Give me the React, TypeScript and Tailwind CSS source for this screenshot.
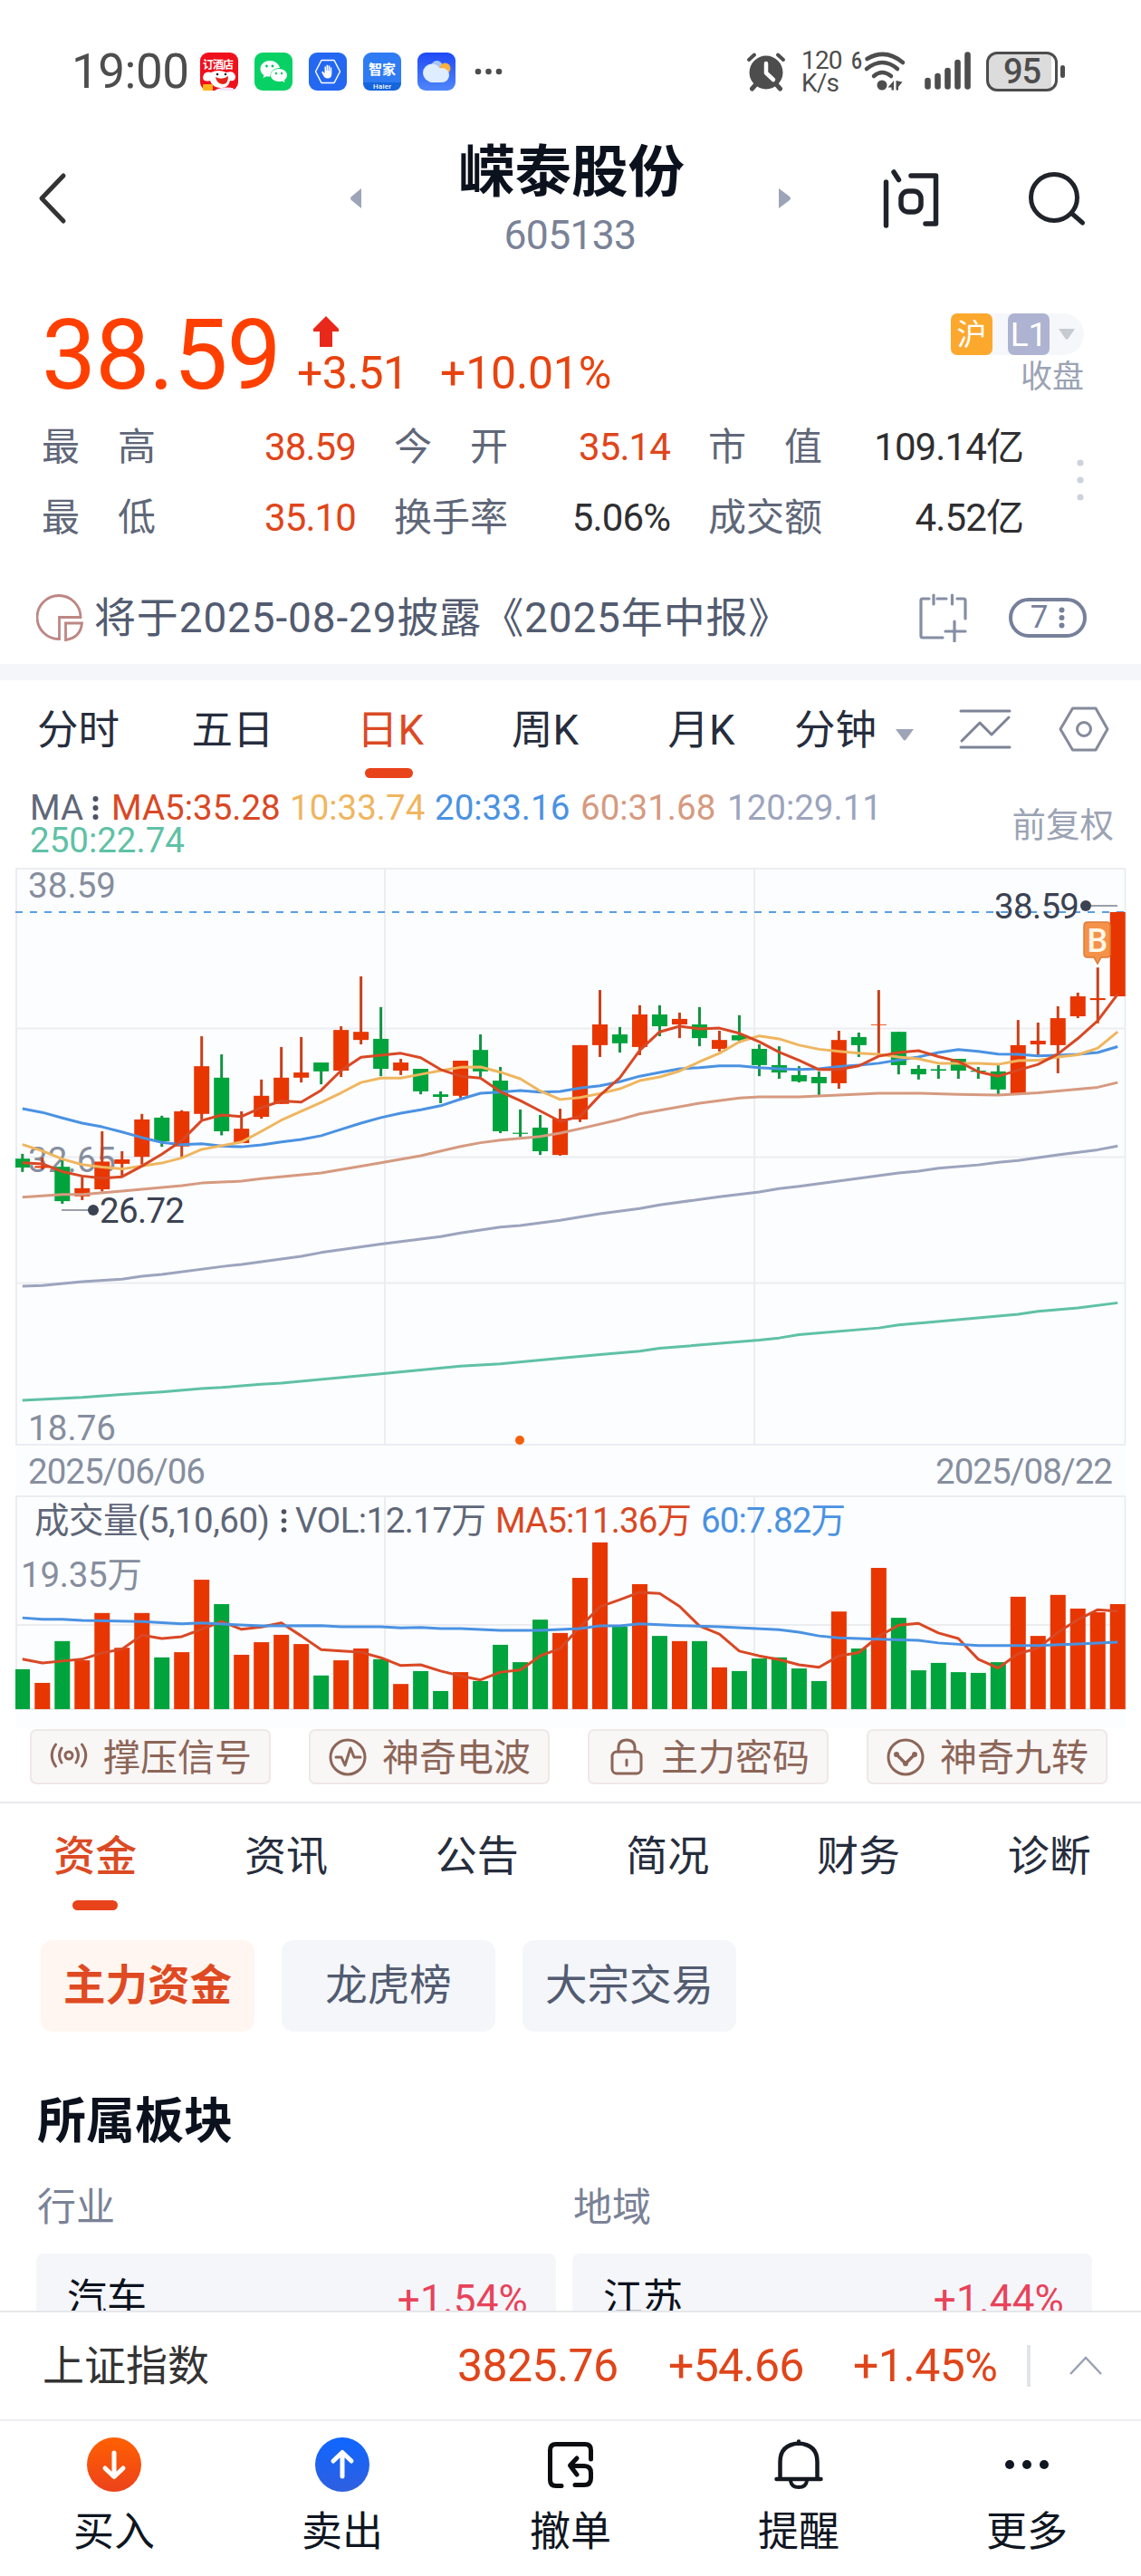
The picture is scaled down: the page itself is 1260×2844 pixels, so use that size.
import type { ReactNode } from 'react'

const UP = '#e83600'
const DOWN = '#00a33c'

// top, bottom, high, low, 1 = rising day
const candles = [
  [1321, 1345, 1308, 1357, 0], [1341, 1346, 1318, 1350, 1], [1343, 1436, 1325, 1443, 0], [1401, 1423, 1370, 1433, 1],
  [1329, 1404, 1247, 1410, 1], [1323, 1335, 1301, 1370, 1], [1215, 1316, 1200, 1337, 1], [1210, 1274, 1205, 1289, 0],
  [1193, 1288, 1190, 1318, 1], [1071, 1200, 990, 1215, 1], [1102, 1247, 1039, 1258, 0], [1240, 1279, 1193, 1279, 1],
  [1151, 1208, 1107, 1213, 1], [1102, 1173, 1019, 1173, 1], [1088, 1102, 992, 1115, 1], [1061, 1085, 1061, 1120, 0],
  [973, 1083, 963, 1100, 1], [978, 1000, 828, 1012, 1], [997, 1078, 911, 1098, 0], [1061, 1083, 1051, 1095, 1],
  [1078, 1139, 1078, 1147, 0], [1147, 1154, 1139, 1171, 0], [1056, 1151, 1056, 1159, 1], [1027, 1085, 985, 1100, 0],
  [1110, 1247, 1073, 1252, 0], [1251, 1254, 1188, 1262, 0], [1237, 1301, 1203, 1311, 0], [1213, 1311, 1186, 1313, 1],
  [1014, 1215, 1014, 1222, 1], [958, 1014, 865, 1046, 1], [985, 1009, 965, 1034, 0], [931, 1019, 906, 1041, 1],
  [931, 963, 906, 990, 0], [943, 958, 926, 995, 1], [958, 995, 911, 1017, 0], [1000, 1024, 975, 1031, 1],
  [987, 1001, 933, 1008, 0], [1024, 1068, 1012, 1098, 0], [1068, 1088, 1017, 1105, 0], [1095, 1112, 1071, 1115, 0],
  [1100, 1117, 1085, 1149, 0], [1000, 1117, 975, 1132, 1], [992, 1014, 980, 1046, 0], [958, 960, 865, 1041, 1],
  [978, 1068, 978, 1093, 0], [1078, 1093, 1068, 1107, 0], [1079, 1083, 1068, 1105, 0], [1051, 1083, 1051, 1105, 0],
  [1083, 1086, 1073, 1105, 0], [1085, 1134, 1068, 1147, 0], [1014, 1145, 946, 1145, 1], [1002, 1012, 953, 1041, 1],
  [941, 1014, 909, 1090, 1], [882, 936, 872, 941, 1], [887, 892, 804, 955, 1], [654, 882, 654, 882, 1],
]

const ma5 = [1332, 1335, 1356, 1368, 1374, 1370, 1341, 1309, 1272, 1218, 1203, 1207, 1183, 1165, 1168, 1136, 1083, 1047, 1041, 1036, 1048, 1080, 1098, 1103, 1140, 1164, 1192, 1220, 1207, 1150, 1102, 1028, 978, 963, 970, 968, 982, 1005, 1033, 1055, 1080, 1080, 1070, 1044, 1034, 1029, 1045, 1058, 1086, 1098, 1082, 1066, 1038, 996, 948, 876]
const ma10 = [1283, 1300, 1322, 1337, 1344, 1349, 1341, 1333, 1319, 1296, 1286, 1276, 1247, 1217, 1193, 1169, 1143, 1115, 1103, 1103, 1093, 1083, 1074, 1073, 1087, 1105, 1138, 1161, 1156, 1145, 1132, 1110, 1100, 1084, 1059, 1036, 1005, 989, 997, 1014, 1025, 1031, 1036, 1039, 1046, 1051, 1063, 1063, 1063, 1066, 1056, 1055, 1046, 1040, 1022, 978]
const ma20 = [1186, 1196, 1211, 1225, 1235, 1249, 1264, 1277, 1283, 1281, 1287, 1289, 1284, 1276, 1269, 1259, 1242, 1225, 1210, 1198, 1189, 1178, 1160, 1144, 1141, 1137, 1141, 1139, 1130, 1124, 1113, 1098, 1088, 1078, 1075, 1070, 1070, 1075, 1078, 1080, 1078, 1072, 1068, 1063, 1054, 1046, 1034, 1026, 1031, 1038, 1039, 1043, 1041, 1039, 1034, 1018]
const ma60 = [[0, 1425], [2, 1418], [3, 1418], [5, 1409], [8, 1394], [9, 1387], [11, 1382], [12, 1375], [15, 1360], [18, 1332], [20, 1313], [22, 1288], [23, 1278], [24, 1271], [26, 1261], [27, 1252], [28, 1240], [30, 1215], [31, 1200], [34, 1171], [36, 1157], [37, 1154], [39, 1154], [43, 1144], [45, 1144], [47, 1147], [49, 1149], [51, 1143], [54, 1128], [55, 1115]]
const ma120 = [[0, 1666], [1, 1664], [3, 1654], [5, 1647], [6, 1639], [7, 1634], [10, 1613], [11, 1607], [14, 1585], [15, 1575], [18, 1552], [21, 1532], [22, 1522], [24, 1506], [25, 1502], [27, 1488], [29, 1470], [31, 1456], [32, 1446], [35, 1424], [37, 1411], [38, 1402], [39, 1396], [44, 1360], [45, 1355], [46, 1347], [48, 1338], [49, 1331], [50, 1326], [52, 1311], [54, 1297], [55, 1287]]
const ma250 = [[0, 1975], [3, 1967], [5, 1959], [7, 1952], [9, 1943], [10, 1940], [12, 1931], [13, 1928], [18, 1903], [22, 1882], [24, 1876], [27, 1861], [29, 1851], [31, 1842], [32, 1834], [37, 1812], [38, 1806], [39, 1797], [43, 1779], [44, 1771], [50, 1742], [51, 1734], [53, 1725], [55, 1711]]

const volumes = [1232, 1269, 1156, 1208, 1080, 1174, 1080, 1200, 1186, 990, 1056, 1193, 1159, 1139, 1164, 1249, 1208, 1176, 1205, 1272, 1237, 1291, 1240, 1264, 1166, 1213, 1098, 1134, 985, 889, 1117, 1002, 1142, 1156, 1156, 1227, 1237, 1203, 1200, 1230, 1264, 1076, 1176, 958, 1093, 1235, 1215, 1240, 1242, 1213, 1036, 1142, 1031, 1068, 1078, 1056]
const vol5 = [1205, 1215, 1210, 1205, 1188, 1178, 1140, 1149, 1144, 1124, 1103, 1124, 1118, 1107, 1142, 1179, 1183, 1186, 1201, 1222, 1220, 1237, 1250, 1261, 1240, 1234, 1196, 1176, 1118, 1063, 1044, 1024, 1027, 1062, 1115, 1137, 1183, 1196, 1206, 1220, 1227, 1196, 1187, 1143, 1113, 1108, 1134, 1149, 1205, 1229, 1190, 1175, 1132, 1098, 1071, 1075]
const vol60 = [[0, 1093], [1, 1097], [2, 1097], [3, 1100], [6, 1103], [8, 1109], [9, 1107], [12, 1115], [15, 1114], [16, 1117], [18, 1117], [19, 1120], [20, 1119], [21, 1122], [22, 1122], [24, 1127], [26, 1127], [28, 1122], [29, 1115], [30, 1115], [31, 1109], [33, 1114], [35, 1117], [38, 1125], [39, 1132], [40, 1142], [41, 1147], [43, 1151], [45, 1154], [46, 1161], [48, 1168], [51, 1168], [53, 1164], [55, 1159]]

const px = (i: number) => 24.8 + i * 21.99
const py = (v: number) => 740 + v / 2.45
const vy = (v: number) => 1340 + v / 2.45

function points(series: number[] | number[][], y: (v: number) => number) {
  return series
    .map((p, i) => (Array.isArray(p) ? `${px(p[0])},${y(p[1])}` : `${px(i)},${y(p)}`))
    .join(' ')
}

function Label({ x, y, w, fill = '#868e9e', children }: { x: number; y: number; w: number; fill?: string; children: string }) {
  return (
    <text x={x} y={y} textLength={w} fontSize="38.500" fill={fill}>
      {children}
    </text>
  )
}

function StockChart() {
  return (
    <svg className="block shrink-0" width="1260" height="950" viewBox="0 958 1260 950">
      <rect x="17" y="958" width="1226" height="950" fill="#fcfdff" />
      <g stroke="#ebedf1" strokeWidth="2" fill="none">
        <path d="M17 959H1243M17 1135.5H1243M17 1277.5H1243M17 1416.5H1243M17 1595H1243M17 1652H1243M17 1794H1243M17 1887H1243" />
        <path d="M18 958V1595M425 958V1595M833 958V1595M1242.500 958V1595M18 1652V1887M425 1652V1887M833 1652V1887M1242.500 1652V1887" />
      </g>

      <Label x={31} y={991} w={97}>38.59</Label>
      <Label x={31} y={1294} w={97}>32.65</Label>
      <Label x={31} y={1590} w={97}>18.76</Label>
      <Label x={31} y={1638} w={196}>2025/06/06</Label>
      <Label x={1033} y={1638} w={196}>2025/08/22</Label>

      <path d="M17 1007H1243" stroke="#5a9fe2" strokeWidth="2.200" strokeDasharray="8 8" />

      {candles.map(([top, bottom, high, low, up], i) => (
        <g key={i} fill={up ? UP : DOWN}>
          <rect x={px(i) - 1.5} y={py(high)} width="3" height={(low - high) / 2.45} fill={up ? '#c8401a' : '#149243'} />
          <rect x={i === 0 ? 17 : px(i) - 8.5} y={py(top)} width={i === 0 ? 16 : 17} height={(bottom - top) / 2.45} />
        </g>
      ))}

      <g fill="none" strokeWidth="3" strokeLinejoin="round">
        <polyline points={points(ma250, py)} stroke="#5fc1a6" />
        <polyline points={points(ma120, py)} stroke="#9ca4bd" />
        <polyline points={points(ma60, py)} stroke="#d69a80" />
        <polyline points={points(ma20, py)} stroke="#4a92e2" />
        <polyline points={points(ma10, py)} stroke="#efb65f" />
        <polyline points={points(ma5, py)} stroke="#d94824" />
      </g>

      <path d="M68 1336H98M1205 1000H1234" stroke="#9a9fa8" strokeWidth="2" />
      <circle cx="103" cy="1336" r="6" fill="#3b4252" />
      <Label x={110} y={1350} w={94} fill="#3b4252">26.72</Label>
      <circle cx="1199" cy="1000" r="6" fill="#3b4252" />
      <Label x={1098} y={1014} w={94} fill="#3b4252">38.59</Label>

      <path d="M1201 1018H1222Q1226 1018 1226 1022V1053Q1226 1057 1222 1057H1216L1212 1064L1208 1057H1201Q1197 1057 1197 1053V1022Q1197 1018 1201 1018Z" fill="#f4924a" stroke="#de7a35" strokeWidth="1.500" />
      <text x="1200.500" y="1051" fontSize="36" fontWeight="500" fill="#fff7e6">B</text>
      <circle cx="574" cy="1590" r="5" fill="#f2600c" />

      <Label x={38} y={1692} w={260} fill="#5f6778">成交量(5,10,60)</Label>
      <g fill="#4b5263">
        <circle cx="313.500" cy="1669" r="2.800" />
        <circle cx="313.500" cy="1679" r="2.800" />
        <circle cx="313.500" cy="1689" r="2.800" />
      </g>
      <Label x={326} y={1692} w={211} fill="#5f6778">VOL:12.17万</Label>
      <Label x={547} y={1692} w={217} fill="#d94824">MA5:11.36万</Label>
      <Label x={774} y={1692} w={160} fill="#4a92e2">60:7.82万</Label>
      <Label x={23} y={1752} w={134}>19.35万</Label>

      {volumes.map((v, i) => (
        <rect key={i} x={i === 0 ? 17 : px(i) - 8.5} y={vy(v)} width={i === 0 ? 16 : 17} height={(1340 - v) / 2.45} fill={candles[i][4] ? UP : DOWN} />
      ))}
      <g fill="none" strokeWidth="3" strokeLinejoin="round">
        <polyline points={points(vol5, vy)} stroke="#d94824" />
        <polyline points={points(vol60, vy)} stroke="#4a92e2" />
      </g>
    </svg>
  )
}

function StatusBar() {
  return (
    <div className="flex h-[158px] shrink-0 items-center pl-[79px] text-[#4d4d4d]">
      <div className="w-[142px] text-[53px] leading-none tracking-[-0.5px]">19:00</div>
      <div className="flex gap-[18px]">
        <svg width="42" height="42" viewBox="0 0 42 42">
          <rect width="42" height="42" rx="9" fill="#f0101c" />
          <text x="3" y="18" fontSize="12" fontWeight="700" fill="#fff" textLength="34">订酒店</text>
          <path d="M3 28Q4 20 12 22Q20 18 29 22Q38 19 39 27Q39 32 33 31Q31 40 22 39Q13 38 11 31Q4 33 3 28Z" fill="#fff" />
          <path d="M17 27Q24 31 31 26Q31 35 25 35Q18 34 17 27Z" fill="#e2231a" />
          <circle cx="19" cy="24" r="1.300" fill="#222" />
          <circle cx="28" cy="24" r="1.300" fill="#222" />
          <rect x="3" y="35" width="11" height="7" rx="1" fill="#ffb31a" />
          <path d="M16 42Q22 37 36 39L38 42Z" fill="#f3e6fa" />
        </svg>
        <svg width="42" height="42" viewBox="0 0 42 42">
          <rect width="42" height="42" rx="9" fill="#07d165" />
          <path d="M17 9C11 9 6.500 13 6.500 18C6.500 21 8 23.500 10.500 25L9.500 28L13.500 26.200Q15 26.600 17.500 26.600C17 21 21.500 17 28 17C27 12.500 22.500 9 17 9Z" fill="#fff" />
          <path d="M27 18C21.800 18 18 21.200 18 25C18 29 22 32 27 32Q29 32 30.500 31.400L33.500 33L33 30.200C34.800 29 36 27.200 36 25C36 21.200 32 18 27 18Z" fill="#fff" />
          <g fill="#07c160">
            <circle cx="13.500" cy="15" r="1.400" />
            <circle cx="20" cy="15" r="1.400" />
            <circle cx="24" cy="23" r="1.200" />
            <circle cx="30" cy="23" r="1.200" />
          </g>
        </svg>
        <svg width="42" height="42" viewBox="0 0 42 42">
          <rect width="42" height="42" rx="9" fill="#2468f2" />
          <path d="M14 8.500H28L34.500 21L28 33.500H14L7.500 21Z" fill="none" stroke="#fff" strokeWidth="1.500" strokeLinejoin="round" />
          <path d="M17 27L14 21.500L15.500 20.800L17.500 23V15.500H19V20H19.500V13.800H21.200V20H21.700V14.500H23.300V20.500H23.800V16.500H25.300V24Q25 28 21.500 28.500Q18.500 28.500 17 27Z" fill="#fff" />
        </svg>
        <svg width="42" height="42" viewBox="0 0 42 42">
          <rect width="42" height="42" rx="9" fill="#2f7bf3" />
          <path d="M0 33H42Q42 42 33 42H9Q0 42 0 33Z" fill="#1565dc" />
          <text x="6" y="24" fontSize="15" fontWeight="700" fill="#fff" textLength="30">智家</text>
          <text x="11" y="40" fontSize="8" fontWeight="500" fill="#fff" textLength="20">Haier</text>
        </svg>
        <svg width="42" height="42" viewBox="0 0 42 42">
          <defs>
            <linearGradient id="sky" x2="0" y2="1">
              <stop stopColor="#1f49f5" />
              <stop offset="1" stopColor="#4f86fa" />
            </linearGradient>
          </defs>
          <rect width="42" height="42" rx="9" fill="url(#sky)" />
          <circle cx="21.500" cy="15.500" r="6.500" fill="#a9c4f8" />
          <circle cx="30.500" cy="17.500" r="6" fill="#fcb13c" />
          <circle cx="16" cy="22.500" r="10" fill="#deedff" />
          <circle cx="27" cy="25" r="8" fill="#deedff" />
          <rect x="12" y="24" width="16" height="9" rx="4" fill="#deedff" />
        </svg>
      </div>
      <svg className="ml-[21px]" width="32" height="10" viewBox="0 0 32 10" fill="currentColor">
        <circle cx="4" cy="5" r="3.300" />
        <circle cx="15.500" cy="5" r="3.300" />
        <circle cx="27" cy="5" r="3.300" />
      </svg>

      <svg className="ml-[268px]" width="44" height="44" viewBox="0 0 44 44" fill="none" stroke="currentColor" strokeLinecap="round">
        <circle cx="22" cy="23" r="18.500" fill="currentColor" stroke="none" />
        <path d="M3 9L9 3.500M41 9L35 3.500" strokeWidth="4" />
        <path d="M10 37L6.500 41M34 37L37.500 41" strokeWidth="5" />
        <path d="M22 13V23.500L30 31" stroke="#fff" strokeWidth="4.500" strokeLinejoin="round" />
      </svg>
      <div className="ml-[17px] w-[57px] text-[28px] leading-[25px] tracking-[-0.800px]">
        <div>120</div>
        <div>K/s</div>
      </div>
      <svg className="overflow-visible" width="60" height="46" viewBox="0 0 60 46" fill="none" stroke="currentColor" strokeLinecap="round">
        <text x="-2" y="20" fontSize="26" fontWeight="500" fill="currentColor" stroke="none" textLength="12" lengthAdjust="spacingAndGlyphs">6</text>
        <path d="M15.500 9Q36 -3 55 13" strokeWidth="4.500" />
        <path d="M15 20Q32.500 6 49 20" strokeWidth="4.500" />
        <path d="M23 28Q32 20 42 28" strokeWidth="4.500" />
        <circle cx="32" cy="38" r="5.500" fill="currentColor" stroke="none" />
        <path d="M45 33V43.500H42.500V40.500H38.500ZM47.500 33V43.500H50V40L54.500 34.500Z" fill="currentColor" stroke="none" />
      </svg>
      <svg className="ml-[19px]" width="52" height="44" viewBox="0 0 52 44" stroke="currentColor" strokeWidth="6.600" strokeLinecap="round">
        <path d="M3.500 32V38.500M14.500 27V38.500M25.500 21V38.500M36.500 12V38.500M47.500 3.500V38.500" />
      </svg>
      <div className="ml-[16px] flex h-[44px] w-[79px] items-center justify-center rounded-[12px] border-[3.5px] border-[#4d4d4d] bg-[linear-gradient(90deg,#dcdcdc_94%,#fff_94%)] text-[38px] leading-none font-medium tracking-[-1px]">
        95
      </div>
      <div className="ml-[3px] h-[14px] w-[5px] rounded-full bg-[#4d4d4d]" />
    </div>
  )
}

function Header() {
  return (
    <div className="flex h-[122px] shrink-0 items-center pl-[42px]">
      <svg width="32" height="60" viewBox="0 0 32 60" fill="none" stroke="#333" strokeWidth="5" strokeLinecap="round" strokeLinejoin="round">
        <path d="M28 5L4 30L28 55" />
      </svg>
      <svg className="ml-[312px]" width="14" height="22" viewBox="0 0 14 22" fill="#9ea4b8">
        <path d="M13 0V22L2 13Q0 11 2 9Z" />
      </svg>
      <div className="ml-[60px] flex w-[342px] flex-col items-center gap-[16px] pt-[3px]">
        <div className="text-[62.500px] leading-[62px] font-bold whitespace-nowrap text-[#0c121d]">嵘泰股份</div>
        <div className="pr-[3px] text-[44.500px] leading-[44px] tracking-[-0.700px] text-[#7a8297]">605133</div>
      </div>
      <svg className="ml-[58px]" width="14" height="22" viewBox="0 0 14 22" fill="#9ea4b8">
        <path d="M0 0V22L12 13Q14 11 12 9Z" />
      </svg>
      <svg className="ml-[101px]" width="62" height="68" viewBox="0 0 62 68" fill="none" stroke="#20242a" strokeWidth="5.500" strokeLinecap="round" strokeLinejoin="round">
        <path d="M3.500 16V64M12 5L17.500 13.500M31 9H58.500V62H47" />
        <rect x="20" y="26" width="22" height="23" rx="8" />
      </svg>
      <svg className="ml-[99px]" width="66" height="62" viewBox="0 0 66 62" fill="none" stroke="#20242a" strokeWidth="5" strokeLinecap="round">
        <circle cx="28" cy="30" r="25.500" />
        <path d="M48 48L59.500 58" />
      </svg>
    </div>
  )
}

function Quote() {
  return (
    <div className="flex h-[173px] shrink-0 items-start pr-[63px] pl-[46px] text-[#e8430f]">
      <div className="mt-[59px] w-[282px] text-[107px] leading-none tracking-[-1px] text-[#ff3f00]">38.59</div>
      <div className="mt-[69px]">
        <svg className="ml-[17px] block" width="30" height="34" viewBox="0 0 30 34">
          <path d="M15 0L29 14V17H22V34H8V17H1V14Z" fill="#e9281c" />
        </svg>
        <div className="mt-[4px] flex text-[50px] leading-none">
          <div className="w-[158px] tracking-[-0.700px]">+3.51</div>
          <div className="tracking-[-0.200px]">+10.01%</div>
        </div>
      </div>
      <div className="mt-[66px] ml-auto flex flex-col items-end">
        <div className="flex h-[46px] items-center rounded-r-full bg-[#f6f7fa] text-[34px] leading-none text-white">
          <div className="flex h-[46px] w-[46px] items-center justify-center rounded-[7px] bg-[#fca82d] text-[33px]">沪</div>
          <div className="ml-[17px] flex h-[46px] w-[46px] items-center justify-center rounded-[7px] bg-[#adb3d0] text-[37px]">L1</div>
          <svg className="mr-[10px] ml-[10px]" width="18" height="12" viewBox="0 0 18 12" fill="#c6cad1">
            <path d="M0 0H18L10.500 11Q9 12.500 7.500 11Z" />
          </svg>
        </div>
        <div className="mt-[7px] text-[35px] leading-none text-[#9ba3b4]">收盘</div>
      </div>
    </div>
  )
}

const stats = [
  [['最', '高'], '38.59', ['今', '开'], '35.14', ['市', '值'], '109.14亿'],
  [['最', '低'], '35.10', ['换', '手', '率'], '5.06%', ['成', '交', '额'], '4.52亿'],
]

function StatLabel({ chars }: { chars: string[] }) {
  return (
    <div className="flex w-[126px] justify-between tracking-normal text-[#5f6778]">
      {chars.map((c) => (
        <span key={c}>{c}</span>
      ))}
    </div>
  )
}

function Stats() {
  return (
    <div className="flex h-[156px] shrink-0 pl-[46px]">
      <div className="w-[1084px] pt-[2px] text-[42px] leading-none">
        {stats.map((row, i) => (
          <div key={i} className="flex h-[78px] items-center tracking-[-0.900px]">
            <StatLabel chars={row[0] as string[]} />
            <div className="w-[221px] text-right text-[#e0451a]">{row[1]}</div>
            <div className="ml-[42px]">
              <StatLabel chars={row[2] as string[]} />
            </div>
            <div className={`w-[179px] text-right ${i === 0 ? 'text-[#e0451a]' : 'text-[#2f2f31]'}`}>{row[3]}</div>
            <div className="ml-[42px]">
              <StatLabel chars={row[4] as string[]} />
            </div>
            <div className="flex-1 text-right text-[#2f2f31]">{row[5]}</div>
          </div>
        ))}
      </div>
      <svg className="mt-[53px] ml-[59px]" width="8" height="48" viewBox="0 0 8 48" fill="#cdd3dc">
        <circle cx="4" cy="5" r="3.600" />
        <circle cx="4" cy="24" r="3.600" />
        <circle cx="4" cy="43" r="3.600" />
      </svg>
    </div>
  )
}

function Notice() {
  return (
    <div className="flex h-[124px] shrink-0 items-center pt-[21px] pl-[40px]">
      <svg width="53" height="52" viewBox="0 0 53 52" fill="none" stroke="#bd8784" strokeWidth="2.800">
        <path d="M49 25.500A24 24 0 1 0 25.500 49.500V25.500Z" />
        <path d="M32.500 32H50.500Q49 48 32.500 50.500Z" />
      </svg>
      <div className="ml-[11px] text-[46px] leading-none tracking-[0.850px] whitespace-nowrap text-[#525b70]">将于2025-08-29披露《2025年中报》</div>
      <svg className="ml-auto" width="54" height="54" viewBox="0 0 54 54" fill="none" stroke="#858ea3" strokeWidth="3.200" strokeLinecap="round">
        <path d="M12 6H5Q3 6 3 8V47Q3 49 5 49H27M21 6H31M43 6H50Q52 6 52 8V28" />
        <path d="M17 2V12M37.500 2V12M40 31V53M30 42H52" />
      </svg>
      <div className="mr-[60px] ml-[46px] flex h-[44px] w-[86px] items-center justify-center gap-[12px] rounded-full border-[4px] border-[#76809a] text-[35px] leading-none text-[#76809a]">
        7
        <svg width="7" height="24" viewBox="0 0 7 24" fill="#76809a">
          <circle cx="3.500" cy="3.500" r="3" />
          <circle cx="3.500" cy="12" r="3" />
          <circle cx="3.500" cy="20.500" r="3" />
        </svg>
      </div>
    </div>
  )
}

function PeriodTabs() {
  return (
    <div className="flex h-[108px] shrink-0 items-center text-[45.500px] leading-none text-[#262d3d]">
      <div className="w-[170px] pt-[3px] pl-[41px]">分时</div>
      <div className="w-[174px] pt-[3px] text-center">五日</div>
      <div className="relative w-[176px] pt-[3px] pr-[2px] text-center text-[#dc4a24]">
        日K
        <div className="absolute top-[67px] left-[59px] h-[11px] w-[53px] rounded-full bg-[#e8431b]" />
      </div>
      <div className="w-[166px] pt-[3px] pr-[2px] text-center">周K</div>
      <div className="w-[180px] pt-[3px] pr-[3px] text-center">月K</div>
      <div className="ml-[11px] w-[112px] pt-[3px]">分钟</div>
      <svg className="mt-[12px]" width="20" height="13" viewBox="0 0 20 13" fill="#9ea4b8">
        <path d="M0 0H20L11.500 11.500Q10 13.500 8.500 11.500Z" />
      </svg>
      <svg className="ml-[50px]" width="58" height="46" viewBox="0 0 58 46" fill="none" stroke="#7d8496" strokeWidth="3" strokeLinecap="round" strokeLinejoin="round">
        <path d="M2 3H56M2 43H56M3 36L23 16L36 29L55 10" />
      </svg>
      <svg className="ml-[52px]" width="56" height="50" viewBox="0 0 56 50" fill="none" stroke="#858a9b" strokeWidth="3" strokeLinejoin="round">
        <path d="M15.500 2H41L54 25L41 48H15.500L2 25Z" />
        <circle cx="28" cy="25" r="7.500" />
      </svg>
    </div>
  )
}

function MaLegend() {
  return (
    <div className="flex h-[99px] shrink-0 justify-between pt-[15px] pr-[30px] pl-[33px] text-[38.500px]">
      <div className="whitespace-nowrap">
        <div className="flex h-[36px] items-center leading-[36px]">
          <span className="w-[69px] text-[#5f6778]">MA</span>
          <svg className="mr-[14px]" width="7" height="28" viewBox="0 0 7 28" fill="#4b5263">
            <circle cx="3.500" cy="4" r="3" />
            <circle cx="3.500" cy="14" r="3" />
            <circle cx="3.500" cy="24" r="3" />
          </svg>
          <span className="w-[197px] text-[#d94824]">MA5:35.28</span>
          <span className="w-[160px] text-[#efb65f]">10:33.74</span>
          <span className="w-[161px] text-[#4a92e2]">20:33.16</span>
          <span className="w-[162px] text-[#d69a80]">60:31.68</span>
          <span className="text-[#9ca4bd]">120:29.11</span>
        </div>
        <div className="h-[36px] leading-[36px] text-[#5fc1a6]">250:22.74</div>
      </div>
      <div className="pt-[18px] text-[37.500px] leading-[38px] text-[#9ba3b4]">前复权</div>
    </div>
  )
}

function SignalButton({ icon, label }: { icon: ReactNode; label: string }) {
  return (
    <div className="flex h-[61px] w-[266px] items-center rounded-[7px] border-2 border-[#efe7e8] bg-[#f9f6f6] pl-[19px] text-[41px] leading-none text-[#8c6658]">
      <svg width="44" height="44" viewBox="0 0 44 44" fill="none" stroke="#8c6658" strokeWidth="3" strokeLinecap="round" strokeLinejoin="round">
        {icon}
      </svg>
      <span className="ml-[16px] pt-[3px] whitespace-nowrap">{label}</span>
    </div>
  )
}

function Signals() {
  return (
    <div className="flex h-[81px] shrink-0 justify-between pt-px pr-[37px] pl-[33px]">
      <SignalButton
        label="撑压信号"
        icon={
          <>
            <circle cx="22" cy="20" r="4" />
            <path d="M14 12Q9 20 14 28M30 12Q35 20 30 28M7.500 8Q-1 20 7.500 32M36.500 8Q45 20 36.500 32" />
          </>
        }
      />
      <SignalButton
        label="神奇电波"
        icon={
          <>
            <circle cx="22" cy="22" r="19" />
            <path d="M9 22H15L19 31L25 12L29 22H36" />
          </>
        }
      />
      <SignalButton
        label="主力密码"
        icon={
          <>
            <rect x="6" y="16" width="32" height="24" rx="5" />
            <path d="M13 16V12Q13 3 22 3Q31 3 31 12V16M22 25V31" />
          </>
        }
      />
      <SignalButton
        label="神奇九转"
        icon={
          <>
            <circle cx="22" cy="22" r="19" />
            <path d="M12 19L22 29L32 19" strokeWidth="3.500" />
            <circle cx="12" cy="19" r="1.500" />
            <circle cx="22" cy="29" r="1.500" />
            <circle cx="32" cy="19" r="1.500" />
          </>
        }
      />
    </div>
  )
}

function InfoTabs() {
  return (
    <div className="h-[152px] shrink-0 border-t-2 border-[#e9eaed] text-[46px] leading-none text-[#262d3d]">
      <div className="grid w-[1264px] grid-cols-6">
        {['资金', '资讯', '公告', '简况', '财务', '诊断'].map((t, i) => (
          <div key={t} className="flex flex-col items-center pt-[35px]">
            <span className={i === 0 ? 'font-medium text-[#dc4a24]' : ''}>{t}</span>
            {i === 0 && <span className="mt-[26px] h-[11px] w-[50px] rounded-full bg-[#e8431b]" />}
          </div>
        ))}
      </div>
    </div>
  )
}

function Boards() {
  return (
    <div className="h-[410px] shrink-0 overflow-hidden">
      <div className="flex gap-[30px] pt-px pl-[45px] text-[46.500px] leading-none text-[#525b70]">
        <div className="flex h-[101px] w-[236px] items-center justify-center rounded-[13px] bg-[#fff6f1] font-bold whitespace-nowrap text-[#e04a22]">主力资金</div>
        <div className="flex h-[101px] w-[236px] items-center justify-center rounded-[13px] bg-[#f4f6fa]">龙虎榜</div>
        <div className="flex h-[101px] w-[236px] items-center justify-center rounded-[13px] bg-[#f4f6fa] whitespace-nowrap">大宗交易</div>
      </div>
      <div className="mt-[73px] pl-[41px] text-[54px] leading-none font-bold text-[#0c121d]">所属板块</div>
      <div className="mt-[46px] grid grid-cols-[574px_574px] gap-x-[18px] pl-[40px] leading-none">
        <div className="pl-px text-[43px] text-[#7a8297]">行业</div>
        <div className="pl-px text-[43px] text-[#7a8297]">地域</div>
        <BoardCard name="汽车" change="+1.54%" />
        <BoardCard name="江苏" change="+1.44%" />
      </div>
    </div>
  )
}

function BoardCard({ name, change }: { name: string; change: string }) {
  return (
    <div className="mt-[29px] flex h-[100px] items-center justify-between rounded-[8px] bg-[#f4f6fa] pr-[31px] pl-[34px] text-[44px]">
      <span className="text-[#0c121d]">{name}</span>
      <span className="pt-[2px] tracking-[0.200px] text-[#e8435a]">{change}</span>
    </div>
  )
}

function IndexBar() {
  return (
    <div className="flex h-[120px] shrink-0 items-center border-t-2 border-[#e6e7ea] pl-[47px] leading-none text-[#e0451a]">
      <div className="w-[458px] text-[46px] text-[#333]">上证指数</div>
      <div className="w-[233px] text-[50px] tracking-[-0.600px]">3825.76</div>
      <div className="w-[204px] text-[50px] tracking-[-0.700px]">+54.66</div>
      <div className="w-[192px] text-[50px] tracking-[-0.500px]">+1.45%</div>
      <div className="h-[46px] w-[4px] bg-[#e1e4ea]" />
      <svg className="ml-[42px]" width="38" height="22" viewBox="0 0 38 22" fill="none" stroke="#9aa2b3" strokeWidth="2.500">
        <path d="M2 20L19 2L36 20" />
      </svg>
    </div>
  )
}

const actions = [
  {
    label: '买入',
    icon: (
      <>
        <circle cx="30" cy="30" r="30" fill="url(#buy)" />
        <path d="M30 17V43M20 34L30 43.500L40 34" stroke="#fff" strokeWidth="5" />
      </>
    ),
  },
  {
    label: '卖出',
    icon: (
      <>
        <circle cx="30" cy="30" r="30" fill="url(#sell)" />
        <path d="M30 43V17M20 26L30 16.500L40 26" stroke="#fff" strokeWidth="5" />
      </>
    ),
  },
  {
    label: '撤单',
    icon: <path d="M20 53.500H14Q7.500 53.500 7.500 47V14Q7.500 7.500 14 7.500H46Q52.500 7.500 52.500 14V24M37 23L29.500 31L37 41M30 31.500H45Q52.500 31.500 52.500 39V45Q52.500 52.500 45 52.500H35" stroke="#0c0d10" strokeWidth="5" />,
  },
  {
    label: '提醒',
    icon: (
      <>
        <path d="M9.500 45V27Q9.500 8 30 6.500Q50.500 8 50.500 27V45M5.500 46H54.500M30 4.500V7" stroke="#14181f" strokeWidth="4.500" />
        <path d="M21 48Q22 55 30 55Q38 55 39 48" stroke="#14181f" strokeWidth="4" />
      </>
    ),
  },
  {
    label: '更多',
    icon: (
      <g fill="#111722">
        <circle cx="11" cy="30" r="5" />
        <circle cx="30" cy="30" r="5" />
        <circle cx="49" cy="30" r="5" />
      </g>
    ),
  },
]

function ActionBar() {
  return (
    <div className="grid flex-1 grid-cols-5 border-t-2 border-[#eeeff2] text-[45px] leading-none text-[#0f1622]">
      {actions.map(({ label, icon }) => (
        <div key={label} className="flex flex-col items-center pt-[18px]">
          <svg width="60" height="60" viewBox="0 0 60 60" fill="none" strokeLinecap="round" strokeLinejoin="round">
            <defs>
              <linearGradient id="buy" x2="0" y2="1">
                <stop stopColor="#ff6000" />
                <stop offset="1" stopColor="#ec421c" />
              </linearGradient>
              <linearGradient id="sell" x2="0" y2="1">
                <stop stopColor="#0f66ff" />
                <stop offset="1" stopColor="#2f5fe0" />
              </linearGradient>
            </defs>
            {icon}
          </svg>
          <span className="mt-[22px]">{label}</span>
        </div>
      ))}
    </div>
  )
}

export default function App() {
  return (
    <div className="flex h-[2844px] w-[1260px] flex-col overflow-hidden bg-white font-['Roboto','Noto_Sans_CJK_SC',sans-serif]">
      <StatusBar />
      <Header />
      <Quote />
      <Stats />
      <Notice />
      <div className="h-[18px] shrink-0 bg-[#f4f6fa]" />
      <PeriodTabs />
      <MaLegend />
      <StockChart />
      <Signals />
      <InfoTabs />
      <Boards />
      <IndexBar />
      <ActionBar />
    </div>
  )
}
